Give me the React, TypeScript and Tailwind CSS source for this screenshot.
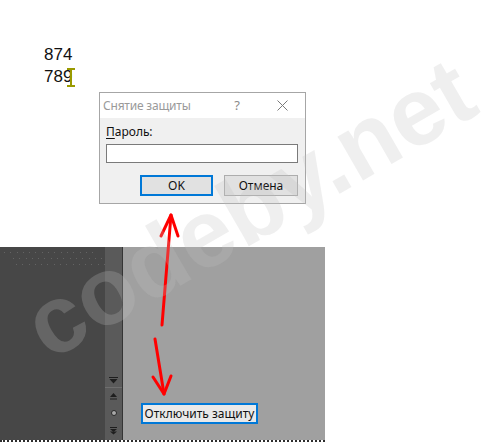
import React from 'react'

const dotRow = Array.from({ length: 15 })

function CloseIcon() {
  return (
    <svg width="11" height="11" viewBox="0 0 11 11">
      <path d="M0.5 0.5 L10.5 10.5 M10.5 0.5 L0.5 10.5" stroke="#7a7a7a" strokeWidth="1" fill="none" />
    </svg>
  )
}

function ScrollIcons() {
  return (
    <div className="flex flex-col items-center mt-auto">
      {/* collapse arrow */}
      <svg width="9" height="7" viewBox="0 0 9 7" className="mb-[3px]">
        <path d="M0 0.5 H9" stroke="#1e1e1e" strokeWidth="1" />
        <path d="M0.5 2 H8.5 L4.5 6.5 Z" fill="#1e1e1e" />
      </svg>
      <div className="w-full h-px bg-[#6e6e6e]" />
      <svg width="7" height="7" viewBox="0 0 7 7" className="mt-[5px]">
        <path d="M3.5 0 L7 4 H0 Z" fill="#1e1e1e" />
        <path d="M0 6 H7" stroke="#1e1e1e" strokeWidth="1" />
      </svg>
      <div className="mt-[10px] w-[6px] h-[6px] rounded-full bg-[#a8a8a8] border border-[#2a2a2a]" />
      <svg width="7" height="8" viewBox="0 0 7 8" className="mt-[11px] mb-[5px]">
        <path d="M0 0.5 H7" stroke="#1e1e1e" strokeWidth="1" />
        <path d="M0 2 H7 L3.5 5 Z" fill="#1e1e1e" />
        <path d="M0 4.5 H7 L3.5 7.5 Z" fill="#1e1e1e" />
      </svg>
    </div>
  )
}

export default function App() {
  return (
    <div className="relative w-[493px] h-[442px] overflow-hidden bg-white font-['Liberation_Sans',sans-serif]">
      {/* Sheet cells */}
      <div className="h-[92px] pt-[44px] pl-[44px] text-[17px] leading-[22px] text-[#111]">
        <div>874</div>
        <div className="flex items-center">
          <span>789</span>
          <span className="relative ml-[-5px] w-[8px] h-[19px] mt-[1px]">
            <span className="absolute left-[3px] top-0 w-[2px] h-full bg-[#9a9a00]" />
            <span className="absolute left-0 top-0 w-[8px] h-[2px] bg-[#9a9a00]" />
            <span className="absolute left-0 bottom-0 w-[8px] h-[2px] bg-[#9a9a00]" />
          </span>
        </div>
      </div>

      {/* Unprotect dialog */}
      <div className="ml-[99px] w-[207px] h-[112px] border border-[#a6a6a6] flex flex-col font-['Noto_Sans',sans-serif] text-[12px]">
        <div className="h-[25px] bg-white flex items-center pl-[3px]">
          <span className="text-[#9a9a9a] tracking-[-0.2px]">Снятие защиты</span>
          <span className="ml-auto mr-[37px] text-[#8a8a8a] text-[13px]">?</span>
          <span className="mr-[17px] flex items-center"><CloseIcon /></span>
        </div>
        <div className="flex-1 bg-[#f0f0f0] px-[6px] pt-[6px]">
          <div className="text-[#111] leading-[15px]">
            <span className="underline underline-offset-2">П</span>ароль:
          </div>
          <div className="mt-[5px] w-[192px] h-[19px] border border-[#7a7a7a] bg-white" />
          <div className="mt-[12px] flex justify-end gap-[11px] pr-[1px]">
            <button className="w-[73px] h-[21px] border-2 border-[#0078d7] bg-[#e1e1e1] text-[#111] leading-none">OK</button>
            <button className="w-[74px] h-[21px] border border-[#adadad] bg-[#e1e1e1] text-[#111] leading-none">Отмена</button>
          </div>
        </div>
      </div>

      {/* Panel */}
      <div className="mt-[43px] w-[325px] h-[195px] flex border-b-2 border-dotted border-[#2e2e2e]">
        <div className="w-[105px] bg-[#474747] flex flex-col gap-[5px] pt-[5px] pl-[4px]">
          {[0, 1, 2].map((r) => (
            <div key={r} className={`flex gap-[5.3px] ${r === 1 ? 'pl-[9px]' : r === 2 ? 'pl-[12px]' : 'pl-[0px]'}`}>
              {dotRow.map((_, i) => (
                <span key={i} className="w-px h-px bg-[#646464]" />
              ))}
            </div>
          ))}
        </div>
        <div className="w-[17px] bg-[#5a5a5a] flex flex-col">
          <ScrollIcons />
        </div>
        <div className="w-px bg-[#353535]" />
        <div className="flex-1 bg-[#a0a0a0] flex flex-col justify-end pb-[16px] pl-[18px]">
          <button className="w-[117px] h-[21px] border-2 border-[#0078d7] bg-[#e9e9e9] text-[#111] text-[12px] leading-none font-['Noto_Sans',sans-serif]">
            Отключить защиту
          </button>
        </div>
      </div>

      {/* Red arrows */}
      <svg className="absolute inset-0 pointer-events-none" width="493" height="442" viewBox="0 0 493 442">
        <g stroke="#ff0000" strokeWidth="3" strokeLinecap="round" strokeLinejoin="round" fill="none">
          <path d="M162 325 L171 215" />
          <path d="M161 236 L171 215 L178 236" />
          <path d="M155 339 L164 394" />
          <path d="M153 377 L164 394 L171 376" />
        </g>
      </svg>

      {/* Watermark */}
      <div className="absolute left-[249px] top-[208px] -translate-x-1/2 -translate-y-1/2 -rotate-30 pointer-events-none whitespace-nowrap text-[96px] leading-none font-bold text-[#bfbfbf]/25 font-['Liberation_Sans',sans-serif]">
        codeby.net
      </div>
    </div>
  )
}
